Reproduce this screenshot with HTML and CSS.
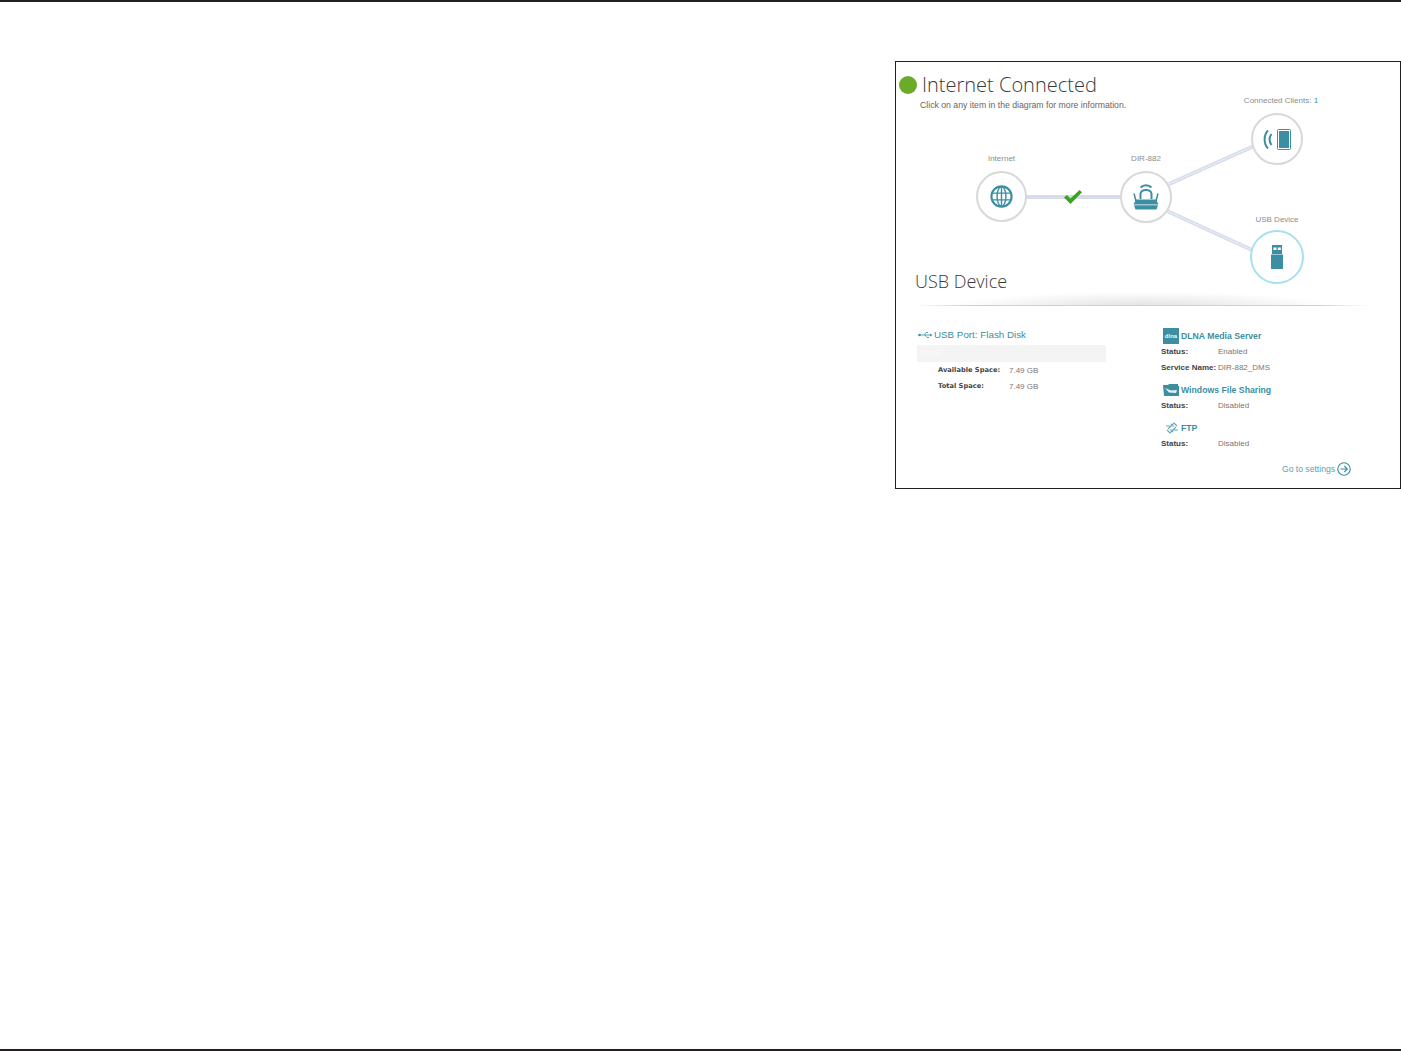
FILE: index.html
```html
<!DOCTYPE html>
<html lang="en">
<head>
<meta charset="utf-8">
<title>USB Device</title>
<link rel="stylesheet" href="styles.css">
</head>
<body>
<div class="rule rule-top"></div>
<main class="page">
  <section class="panel">
    <div class="diagram">
      <svg class="links" viewBox="0 0 505 240" width="505" height="240" aria-hidden="true">
        <g class="link">
          <path d="M130 135H226"/>
          <path d="M273 122L358 84"/>
          <path d="M271 149L356 188"/>
        </g>
        <g class="link-core">
          <path d="M273 122L358 84"/>
          <path d="M271 149L356 188"/>
        </g>
      </svg>
      <div class="status">
        <span class="dot"></span>
        <h1 class="title">Internet Connected</h1>
      </div>
      <p class="hint">Click on any item in the diagram for more information.</p>

      <div class="node node-internet">
        <span class="node-label">Internet</span>
        <svg viewBox="0 0 26 26" width="23" height="23" class="icon-line">
          <circle class="rim" cx="13" cy="13" r="11.4"/>
          <ellipse cx="13" cy="13" rx="5" ry="11.2"/>
          <path d="M13 2V24M2.5 9.2H23.5M2.5 16.8H23.5"/>
        </svg>
      </div>
      <svg class="check" viewBox="0 0 20 16" width="20" height="16" aria-hidden="true">
        <path d="M1 8.5L4 6L7.5 9.5L16.5 1L19 3.2L7.5 15Z"/>
      </svg>
      <div class="node node-router">
        <span class="node-label">DIR-882</span>
        <svg viewBox="0 0 26 26" width="26" height="26" class="icon-router">
          <path class="arc" d="M7.5 3.5C10.5 .5 15.5 .5 18.5 3.5"/>
          <path class="arc" d="M7.5 15V10C7.5 4.5 18.5 4.5 18.5 10V15"/>
          <path class="arc thin" d="M1 9.5L3 17M25 9.5L23 17"/>
          <path class="fill" d="M3 15.5H23L25.5 20.5H.5Z"/>
          <path class="fill" d="M1 21.2H25L23.5 25.5H2.5Z"/>
        </svg>
      </div>
      <div class="node node-clients">
        <span class="node-label label-clients">Connected Clients: <b class="count">1</b></span>
        <svg viewBox="0 0 28 21" width="28" height="21" class="icon-clients">
          <path class="arc" d="M5 1.5C.5 6 .5 15 5 19.5"/>
          <path class="arc" d="M8.5 5C6 8.5 6 12.5 8.5 16"/>
          <rect class="shell" x="14.5" y=".5" width="13" height="20" rx="1"/>
          <rect class="screen" x="16" y="2" width="10" height="17"/>
        </svg>
      </div>
      <div class="node node-usb">
        <span class="node-label">USB Device</span>
        <svg viewBox="0 0 12 24" width="12" height="24" class="icon-usb">
          <path class="fill" d="M1 0H11V9H1Z"/>
          <rect class="hole" x="2.5" y="2.5" width="3" height="2.5"/>
          <rect class="hole" x="6.8" y="2.5" width="3" height="2.5"/>
          <rect class="fill" x="0" y="9.5" width="12" height="14.5" rx="0.6"/>
        </svg>
      </div>
    </div>

    <h2 class="section-title">USB Device</h2>
    <div class="divider"></div>

    <div class="details">
      <div class="col-usb">
        <div class="port-title">
          <svg viewBox="0 0 15 8" width="15" height="8" class="icon-port">
            <path d="M1 4H12M6 4L8 1.5H10M7 4L9 6.5H11"/>
            <circle cx="1.5" cy="4" r="1.3"/>
            <path d="M12 2.5L14.5 4L12 5.5Z"/>
          </svg>
          <span>USB Port: Flash Disk</span>
        </div>
        <div class="port-bar">NTFS</div>
        <dl class="space-list">
          <div class="space-row"><dt>Available Space:</dt><dd>7.49 GB</dd></div>
          <div class="space-row"><dt>Total Space:</dt><dd>7.49 GB</dd></div>
        </dl>
      </div>
      <div class="col-services">
        <h3 class="service"><span class="dlna">dlna</span>DLNA Media Server</h3>
        <div class="info-row"><span class="key">Status:</span><span class="val">Enabled</span></div>
        <div class="info-row"><span class="key">Service Name:</span><span class="val">DIR-882_DMS</span></div>

        <h3 class="service service-gap">
          <svg viewBox="0 0 16 12" width="16" height="12" class="icon-folder">
            <path class="bg" d="M0 1H5L6 0H15V2H16V12H1Z"/>
            <path class="fg" d="M2 4L8 6.5L14 6L13 9L6 8.5Z"/>
          </svg>Windows File Sharing
        </h3>
        <div class="info-row"><span class="key">Status:</span><span class="val">Disabled</span></div>

        <h3 class="service service-gap service-ftp">
          <svg viewBox="0 0 14 14" width="14" height="14" class="icon-ftp">
            <path d="M1 5H8L6 3M13 9H6L8 11M3 8L9 2L12 5M11 6L5 12L2 9"/>
          </svg>FTP
        </h3>
        <div class="info-row"><span class="key">Status:</span><span class="val">Disabled</span></div>
      </div>
    </div>
    <div class="settings">
      <span>Go to settings</span>
      <svg viewBox="0 0 14 14" width="14" height="14" class="icon-go">
        <circle cx="7" cy="7" r="6.2"/>
        <path d="M3.5 7H10M7.3 4L10.3 7L7.3 10"/>
      </svg>
    </div>
  </section>
</main>
<div class="rule rule-bottom"></div>
</body>
</html>
```
FILE: styles.css
```css
* { box-sizing: border-box; }
html, body { margin: 0; padding: 0; }
body {
  width: 1401px;
  height: 1051px;
  overflow: hidden;
  background: #fff;
  display: flex;
  flex-direction: column;
  font-family: "Liberation Sans", Arial, sans-serif;
  color: #555;
}
.rule { height: 2px; background: #231f20; flex: none; }
.page {
  flex: 1;
  display: flex;
  justify-content: flex-end;
  align-items: flex-start;
  padding-top: 59px;
}
.panel {
  width: 506px;
  height: 428px;
  border: 1px solid #231f20;
  background: #fff;
}

/* diagram */
.diagram { position: relative; height: 209px; }
.links { position: absolute; left: 0; top: 0; overflow: visible; }
.links path { fill: none; }
.link path { stroke: #d6dcea; stroke-width: 4; }
.link-core path { stroke: #eef0f7; stroke-width: 1; }
.status {
  position: relative;
  display: flex;
  align-items: center;
  gap: 5px;
  padding: 11px 0 0 3px;
}
.dot { width: 18px; height: 18px; border-radius: 50%; background: #6aab27; flex: none; }
.title {
  margin: 0;
  font: 300 20px/24px "Open Sans", sans-serif;
  color: #3a3a3a;
}
.hint {
  position: relative;
  margin: 2px 0 0 24px;
  font-size: 8.7px;
  line-height: 12px;
  color: #666;
}
.node {
  position: absolute;
  width: 51px;
  height: 51px;
  border-radius: 50%;
  border: 2px solid #d8d8d8;
  background: #fff;
  display: flex;
  align-items: center;
  justify-content: center;
}
.node-label {
  position: absolute;
  left: 50%;
  bottom: 100%;
  transform: translateX(-50%);
  margin-bottom: 9px;
  font-size: 8px;
  line-height: 10px;
  white-space: nowrap;
  color: #8c8c8c;
}
.label-clients { margin-left: 4px; }
.count { font-weight: 400; color: #3d8fa0; }
.node-internet { left: 80px; top: 109px; }
.node-router { left: 224px; top: 109px; width: 52px; height: 52px; }
.node-clients { left: 355px; top: 51px; width: 52px; height: 52px; }
.node-usb {
  left: 354px;
  top: 168px;
  width: 54px;
  height: 54px;
  border-color: #a5e1ef;
}
.node-usb .node-label { margin-bottom: 7px; }
.check { position: absolute; left: 167px; top: 127px; }
.check path { fill: #3aa51c; }
.icon-line { fill: none; stroke: #3c8fa3; stroke-width: 1.6; }
.icon-line .rim { stroke-width: 2.4; }
.icon-router .arc, .icon-clients .arc { fill: none; stroke: #3c8fa3; stroke-width: 2; }
.icon-router .thin { stroke-width: 1.5; }
.icon-router .fill, .icon-usb .fill { fill: #3c8fa3; }
.icon-clients .shell { fill: none; stroke: #3c8fa3; stroke-width: 1; }
.icon-clients .screen { fill: #3c8fa3; }
.icon-usb .hole { fill: #fff; }

/* heading */
.section-title {
  margin: 0;
  padding-left: 19px;
  font: 300 18px/21px "Open Sans", sans-serif;
  color: #3a3a3a;
}
.divider {
  height: 14px;
  margin: 0 30px 0 19px;
  background:
    linear-gradient(90deg, rgba(200, 200, 200, 0), #cfcfcf 12%, #cfcfcf 88%, rgba(200, 200, 200, 0)) bottom / 100% 1px no-repeat,
    radial-gradient(ellipse 42% 100% at 50% 100%, #e2e2e2, rgba(255, 255, 255, 0));
}

/* details */
.details {
  display: grid;
  grid-template-columns: 244px 1fr;
  padding: 21px 0 0 21px;
}
.port-title {
  display: flex;
  align-items: center;
  gap: 1px;
  height: 15px;
  padding-left: 1px;
  font-size: 9.8px;
  color: #3d8fa0;
}
.icon-port { fill: #3d8fa0; stroke: none; }
.icon-port path:first-child { fill: none; stroke: #3d8fa0; stroke-width: 0.8; }
.port-bar {
  width: 189px;
  height: 17px;
  margin-top: 3px;
  padding-left: 3px;
  background: #f4f4f4;
  font-size: 8px;
  line-height: 17px;
  color: #fafafa;
}
.space-list { margin: 0; padding-left: 21px; }
.space-row {
  display: grid;
  grid-template-columns: 71px auto;
  height: 16px;
  align-items: center;
}
.space-row dt { font: 700 6.7px/16px "DejaVu Sans", sans-serif; color: #444; }
.space-row dd { margin: 0; font-size: 8px; color: #777; }

.col-services { padding-top: 1px; }
.service {
  display: flex;
  align-items: center;
  gap: 2px;
  height: 16px;
  margin: 0;
  padding-left: 2px;
  font-size: 8.7px;
  font-weight: 700;
  color: #3d8fa0;
}
.service-gap { margin-top: 6px; }
.service-ftp { padding-left: 4px; gap: 2px; }
.dlna {
  width: 16px;
  height: 16px;
  background: #3d8fa0;
  color: #dff;
  font-size: 6px;
  line-height: 16px;
  text-align: center;
}
.icon-folder .bg { fill: #3d8fa0; }
.icon-folder .fg { fill: #e4f2f5; }
.icon-ftp { fill: none; stroke: #6aa9b7; stroke-width: 1.1; }
.info-row {
  display: grid;
  grid-template-columns: 57px auto;
  height: 16px;
  padding-bottom: 1px;
  align-items: center;
  font-size: 8px;
  color: #777;
}
.key { font-weight: 700; color: #444; white-space: nowrap; }
.settings {
  display: flex;
  justify-content: flex-end;
  align-items: center;
  gap: 2px;
  height: 16px;
  margin-top: 9px;
  padding-right: 49px;
  font-size: 8.6px;
  color: #5c9fae;
}
.icon-go { fill: none; stroke: #3d8fa0; stroke-width: 1.1; }
```
